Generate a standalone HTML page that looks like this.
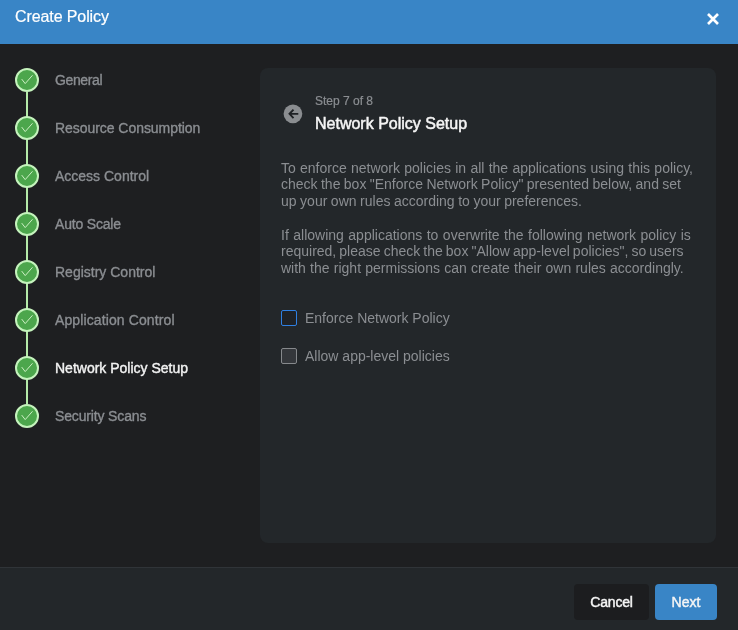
<!DOCTYPE html>
<html><head><meta charset="utf-8">
<style>
*{box-sizing:border-box;margin:0;padding:0}
html,body{width:738px;height:630px;overflow:hidden;background:#1e1f21;font-family:"Liberation Sans",sans-serif;}
.hdr{position:absolute;left:0;top:0;width:738px;height:44px;background:#3985c6;}
.hdr .t{position:absolute;left:15px;top:7px;letter-spacing:-0.1px;font-size:16px;line-height:20px;color:#fff;-webkit-text-stroke:0.2px #fff;white-space:nowrap}
.hdr .x{position:absolute;left:706px;top:12px;width:14px;height:14px}
.step{position:absolute;left:15px;width:24px;height:24px;border-radius:50%;background:#4ca64c;border:2px solid #c5f3bd;}
.step svg{position:absolute;left:0;top:0}
.vline{position:absolute;left:26px;width:2px;background:#b5eaa9;top:92px;height:312px}
.lbl{position:absolute;left:55px;font-size:14px;line-height:16px;color:#8b8e92;white-space:nowrap;-webkit-text-stroke:0.35px #8b8e92}
.lbl.act{color:#f2f2f2;-webkit-text-stroke:0.4px #f2f2f2}
.panel{position:absolute;left:260px;top:68px;width:456px;height:475px;background:#23272a;border-radius:8px;}
.back{position:absolute;left:283px;top:104px;width:20px;height:20px;overflow:visible}
.stepno{position:absolute;left:315px;top:94px;font-size:12px;line-height:14px;color:#8b8e92;white-space:nowrap;-webkit-text-stroke:0.2px #8b8e92}
.title{position:absolute;left:315px;top:114px;font-size:16px;line-height:20px;color:#f5f5f5;white-space:nowrap;-webkit-text-stroke:0.5px #f5f5f5}
.para{position:absolute;left:281px;font-size:14px;line-height:16.4px;color:#8b8e92;white-space:nowrap}
.cb{position:absolute;left:281px;width:16px;height:16px;border-radius:2px}
.cb1{top:310px;border:1.5px solid #2f80e2;background:#1f2226}
.cb2{top:348px;border:1.5px solid #86898c;background:#34373b}
.cbl{position:absolute;left:305px;font-size:14px;line-height:16px;color:#8b8e92;white-space:nowrap}
.footer{position:absolute;left:0;top:567px;width:738px;height:63px;background:#23272a;border-top:1px solid #303438}
.btn{position:absolute;top:584px;height:36px;border-radius:4px;color:#f5f5f5;font-size:14px;line-height:36px;text-align:center;-webkit-text-stroke:0.45px #f5f5f5}
.cancel{left:574px;width:75px;background:#1c1d1f}
.next{left:655px;width:62px;background:#3985c6}
.wrap{position:absolute;left:0;top:0;width:738px;height:630px;will-change:transform}
</style></head><body><div class="wrap">
<div class="hdr"><div class="t">Create Policy</div>
<svg class="x" viewBox="0 0 14 14"><path d="M2 2L12 12M12 2L2 12" stroke="#fff" stroke-width="2.7" stroke-linecap="butt"/></svg>
</div>

<div class="vline"></div>
<div class="step" style="top:68px"><svg width="20" height="20" viewBox="0 0 20 20"><path d="M4.7 9.1L8.2 13.6L15.5 5.3" fill="none" stroke="#cdf0c4" stroke-width="1"/></svg></div>
<div class="step" style="top:116px"><svg width="20" height="20" viewBox="0 0 20 20"><path d="M4.7 9.1L8.2 13.6L15.5 5.3" fill="none" stroke="#cdf0c4" stroke-width="1"/></svg></div>
<div class="step" style="top:164px"><svg width="20" height="20" viewBox="0 0 20 20"><path d="M4.7 9.1L8.2 13.6L15.5 5.3" fill="none" stroke="#cdf0c4" stroke-width="1"/></svg></div>
<div class="step" style="top:212px"><svg width="20" height="20" viewBox="0 0 20 20"><path d="M4.7 9.1L8.2 13.6L15.5 5.3" fill="none" stroke="#cdf0c4" stroke-width="1"/></svg></div>
<div class="step" style="top:260px"><svg width="20" height="20" viewBox="0 0 20 20"><path d="M4.7 9.1L8.2 13.6L15.5 5.3" fill="none" stroke="#cdf0c4" stroke-width="1"/></svg></div>
<div class="step" style="top:308px"><svg width="20" height="20" viewBox="0 0 20 20"><path d="M4.7 9.1L8.2 13.6L15.5 5.3" fill="none" stroke="#cdf0c4" stroke-width="1"/></svg></div>
<div class="step" style="top:356px"><svg width="20" height="20" viewBox="0 0 20 20"><path d="M4.7 9.1L8.2 13.6L15.5 5.3" fill="none" stroke="#cdf0c4" stroke-width="1"/></svg></div>
<div class="step" style="top:404px"><svg width="20" height="20" viewBox="0 0 20 20"><path d="M4.7 9.1L8.2 13.6L15.5 5.3" fill="none" stroke="#cdf0c4" stroke-width="1"/></svg></div>

<div class="lbl" style="top:72px;letter-spacing:-0.37px">General</div>
<div class="lbl" style="top:120px;letter-spacing:-0.05px">Resource Consumption</div>
<div class="lbl" style="top:168px">Access Control</div>
<div class="lbl" style="top:216px;letter-spacing:-0.19px">Auto Scale</div>
<div class="lbl" style="top:264px">Registry Control</div>
<div class="lbl" style="top:312px;letter-spacing:0.11px">Application Control</div>
<div class="lbl act" style="top:360px">Network Policy Setup</div>
<div class="lbl" style="top:408px;letter-spacing:-0.15px">Security Scans</div>

<div class="panel"></div>
<svg class="back" viewBox="0 0 20 20"><circle cx="9.95" cy="9.85" r="9.35" fill="#8a8d90"/><path d="M15.3 9.85H7.1M10.5 5.6L6.5 9.85L10.5 14.1" fill="none" stroke="#1e2124" stroke-width="1.9"/></svg>
<div class="stepno">Step 7 of 8</div>
<div class="title">Network Policy Setup</div>

<div class="para" style="top:160px"><div style="word-spacing:0.37px">To enforce network policies in all the applications using this policy,</div><div style="word-spacing:-0.5px">check the box "Enforce Network Policy" presented below, and set</div><div style="word-spacing:-0.36px">up your own rules according to your preferences.</div></div>
<div class="para" style="top:227px"><div style="word-spacing:0.58px">If allowing applications to overwrite the following network policy is</div><div style="word-spacing:-0.82px">required, please check the box "Allow app-level policies", so users</div><div style="word-spacing:0.33px">with the right permissions can create their own rules accordingly.</div></div>

<div class="cb cb1"></div>
<div class="cbl" style="top:310px">Enforce Network Policy</div>
<div class="cb cb2"></div>
<div class="cbl" style="top:348px">Allow app-level policies</div>

<div class="footer"></div>
<div class="btn cancel" style="letter-spacing:-0.2px">Cancel</div>
<div class="btn next">Next</div>
</div></body></html>
